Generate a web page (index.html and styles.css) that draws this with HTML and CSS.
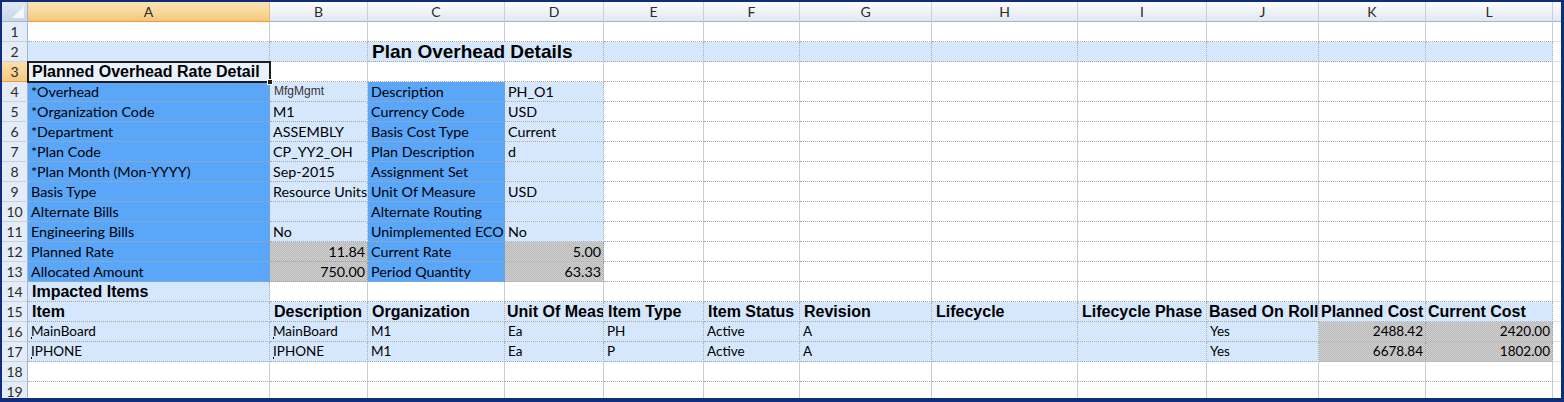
FILE: index.html
```html
<!DOCTYPE html>
<html>
<head>
<meta charset="utf-8">
<link rel="stylesheet" href="styles.css">
</head>
<body>
<div class="frame">
  <div class="sheet">
    <!-- header row -->
    <div class="corner"><span class="tri"></span></div>
    <div class="hd sel">A</div><div class="hd">B</div><div class="hd">C</div><div class="hd">D</div><div class="hd">E</div><div class="hd">F</div><div class="hd">G</div><div class="hd">H</div><div class="hd">I</div><div class="hd">J</div><div class="hd">K</div><div class="hd">L</div><div class="hd fill"></div>

    <!-- 1 -->
    <div class="rh">1</div>
    <div class="c"></div><div class="c"></div><div class="c"></div><div class="c"></div><div class="c"></div><div class="c"></div><div class="c"></div><div class="c"></div><div class="c"></div><div class="c"></div><div class="c"></div><div class="c"></div><div class="c fill"></div>

    <!-- 2 -->
    <div class="rh">2</div>
    <div class="c lb"></div><div class="c lb"></div><div class="c lb span2 title">Plan Overhead Details</div><div class="c lb"></div><div class="c lb"></div><div class="c lb"></div><div class="c lb"></div><div class="c lb"></div><div class="c lb"></div><div class="c lb"></div><div class="c lb"></div><div class="c fill"></div>

    <!-- 3 -->
    <div class="rh sel">3</div>
    <div class="c active b sub">Planned Overhead Rate Detail<span class="handle"></span></div><div class="c"></div><div class="c"></div><div class="c"></div><div class="c"></div><div class="c"></div><div class="c"></div><div class="c"></div><div class="c"></div><div class="c"></div><div class="c"></div><div class="c"></div><div class="c fill"></div>

    <!-- 4 -->
    <div class="rh">4</div>
    <div class="c db">*Overhead</div><div class="c lb sm">MfgMgmt</div><div class="c db">Description</div><div class="c lb">PH_O1</div>
    <div class="c"></div><div class="c"></div><div class="c"></div><div class="c"></div><div class="c"></div><div class="c"></div><div class="c"></div><div class="c"></div><div class="c fill"></div>

    <!-- 5 -->
    <div class="rh">5</div>
    <div class="c db">*Organization Code</div><div class="c lb">M1</div><div class="c db">Currency Code</div><div class="c lb">USD</div>
    <div class="c"></div><div class="c"></div><div class="c"></div><div class="c"></div><div class="c"></div><div class="c"></div><div class="c"></div><div class="c"></div><div class="c fill"></div>

    <!-- 6 -->
    <div class="rh">6</div>
    <div class="c db">*Department</div><div class="c lb">ASSEMBLY</div><div class="c db">Basis Cost Type</div><div class="c lb">Current</div>
    <div class="c"></div><div class="c"></div><div class="c"></div><div class="c"></div><div class="c"></div><div class="c"></div><div class="c"></div><div class="c"></div><div class="c fill"></div>

    <!-- 7 -->
    <div class="rh">7</div>
    <div class="c db">*Plan Code</div><div class="c lb">CP_YY2_OH</div><div class="c db">Plan Description</div><div class="c lb">d</div>
    <div class="c"></div><div class="c"></div><div class="c"></div><div class="c"></div><div class="c"></div><div class="c"></div><div class="c"></div><div class="c"></div><div class="c fill"></div>

    <!-- 8 -->
    <div class="rh">8</div>
    <div class="c db">*Plan Month (Mon-YYYY)</div><div class="c lb">Sep-2015</div><div class="c db">Assignment Set</div><div class="c lb"></div>
    <div class="c"></div><div class="c"></div><div class="c"></div><div class="c"></div><div class="c"></div><div class="c"></div><div class="c"></div><div class="c"></div><div class="c fill"></div>

    <!-- 9 -->
    <div class="rh">9</div>
    <div class="c db">Basis Type</div><div class="c lb">Resource Units</div><div class="c db">Unit Of Measure</div><div class="c lb">USD</div>
    <div class="c"></div><div class="c"></div><div class="c"></div><div class="c"></div><div class="c"></div><div class="c"></div><div class="c"></div><div class="c"></div><div class="c fill"></div>

    <!-- 10 -->
    <div class="rh">10</div>
    <div class="c db">Alternate Bills</div><div class="c lb"></div><div class="c db">Alternate Routing</div><div class="c lb"></div>
    <div class="c"></div><div class="c"></div><div class="c"></div><div class="c"></div><div class="c"></div><div class="c"></div><div class="c"></div><div class="c"></div><div class="c fill"></div>

    <!-- 11 -->
    <div class="rh">11</div>
    <div class="c db">Engineering Bills</div><div class="c lb">No</div><div class="c db">Unimplemented ECO</div><div class="c lb">No</div>
    <div class="c"></div><div class="c"></div><div class="c"></div><div class="c"></div><div class="c"></div><div class="c"></div><div class="c"></div><div class="c"></div><div class="c fill"></div>

    <!-- 12 -->
    <div class="rh">12</div>
    <div class="c db">Planned Rate</div><div class="c gr num">11.84</div><div class="c db">Current Rate</div><div class="c gr num">5.00</div>
    <div class="c"></div><div class="c"></div><div class="c"></div><div class="c"></div><div class="c"></div><div class="c"></div><div class="c"></div><div class="c"></div><div class="c fill"></div>

    <!-- 13 -->
    <div class="rh">13</div>
    <div class="c db">Allocated Amount</div><div class="c gr num">750.00</div><div class="c db">Period Quantity</div><div class="c gr num">63.33</div>
    <div class="c"></div><div class="c"></div><div class="c"></div><div class="c"></div><div class="c"></div><div class="c"></div><div class="c"></div><div class="c"></div><div class="c fill"></div>

    <!-- 14 -->
    <div class="rh">14</div>
    <div class="c lb b">Impacted Items</div>
    <div class="c"></div><div class="c"></div><div class="c"></div><div class="c"></div><div class="c"></div><div class="c"></div><div class="c"></div><div class="c"></div><div class="c"></div><div class="c"></div><div class="c"></div><div class="c fill"></div>

    <!-- 15 -->
    <div class="rh">15</div>
    <div class="c lb b">Item</div><div class="c lb b">Description</div><div class="c lb b">Organization</div><div class="c lb b tight">Unit Of Meas</div><div class="c lb b">Item Type</div><div class="c lb b">Item Status</div><div class="c lb b">Revision</div><div class="c lb b">Lifecycle</div><div class="c lb b">Lifecycle Phase</div><div class="c lb b tight">Based On Roll</div><div class="c lb b tight">Planned Cost</div><div class="c lb b tight">Current Cost</div><div class="c fill"></div>

    <!-- 16 -->
    <div class="rh">16</div>
    <div class="c lb it"><span class="mark"></span>MainBoard</div><div class="c lb it"><span class="mark"></span>MainBoard</div><div class="c lb it">M1</div><div class="c lb it">Ea</div><div class="c lb it">PH</div><div class="c lb it">Active</div><div class="c lb it">A</div><div class="c lb"></div><div class="c lb"></div><div class="c lb it">Yes</div><div class="c gr num it">2488.42</div><div class="c gr num it">2420.00</div><div class="c fill"></div>

    <!-- 17 -->
    <div class="rh">17</div>
    <div class="c lb it"><span class="mark"></span>IPHONE</div><div class="c lb it"><span class="mark"></span>IPHONE</div><div class="c lb it">M1</div><div class="c lb it">Ea</div><div class="c lb it">P</div><div class="c lb it">Active</div><div class="c lb it">A</div><div class="c lb"></div><div class="c lb"></div><div class="c lb it">Yes</div><div class="c gr num it">6678.84</div><div class="c gr num it">1802.00</div><div class="c fill"></div>

    <!-- 18 -->
    <div class="rh">18</div>
    <div class="c"></div><div class="c"></div><div class="c"></div><div class="c"></div><div class="c"></div><div class="c"></div><div class="c"></div><div class="c"></div><div class="c"></div><div class="c"></div><div class="c"></div><div class="c"></div><div class="c fill"></div>

    <!-- 19 -->
    <div class="rh">19</div>
    <div class="c"></div><div class="c"></div><div class="c"></div><div class="c"></div><div class="c"></div><div class="c"></div><div class="c"></div><div class="c"></div><div class="c"></div><div class="c"></div><div class="c"></div><div class="c"></div><div class="c fill"></div>
  </div>
</div>
</body>
</html>
```

FILE: styles.css
```css
* { box-sizing: border-box; }
html, body { margin: 0; padding: 0; background: #ffffff; }

.frame {
  width: 1564px;
  height: 402px;
  border-style: solid;
  border-color: #0f2d7c;
  border-width: 2px 3px 4px 2px;
  overflow: hidden;
  background: #ffffff;
}

.sheet {
  display: grid;
  grid-template-columns: 26px 242px 98px 137px 99px 100px 96px 132px 146px 129px 112px 107px 127px 1fr;
  grid-auto-rows: 20px;
  font-family: Lato, "Liberation Sans", sans-serif;
  font-size: 14.3px;
  color: #000;
}

/* header row */
.corner {
  background: linear-gradient(180deg, #dfe8f5 0%, #c7d6eb 100%);
  border-right: 1px solid #9eb6ce;
  border-bottom: 1px solid #9eb6ce;
  display: flex;
  align-items: flex-end;
  justify-content: flex-end;
  padding: 0 3px 3px 0;
}
.tri {
  width: 0;
  height: 0;
  border-style: solid;
  border-width: 0 0 12px 12px;
  border-color: transparent transparent #f4f7fb transparent;
}
.hd {
  background: linear-gradient(180deg, #fafbfd 0%, #eef2f7 55%, #e1e7ef 100%);
  border-right: 1px solid #c3d1e2;
  border-bottom: 1px solid #9eb6ce;
  display: flex;
  align-items: center;
  justify-content: center;
  color: #2b2b2b;
  font-size: 14px;
}
.hd.sel {
  background: linear-gradient(180deg, #fbe3b0 0%, #f9d898 55%, #f4c57a 100%);
  border-bottom: 1px solid #f29a3b;
  border-right: 1px solid #e0b980;
}
.hd.fill { border-right: none; }

.rh {
  background: #e4ecf7;
  border-right: 1px solid #9eb6ce;
  border-bottom: 1px solid #c5d2e3;
  display: flex;
  align-items: center;
  justify-content: center;
  color: #2b2b2b;
  font-size: 14px;
}
.rh.sel {
  background: linear-gradient(180deg, #fbe0a8 0%, #f6c880 100%);
  border-bottom: 1px solid #f29a3b;
}

/* cells */
.c {
  border-right: 1px solid #c8cdd4;
  border-bottom: 1px dotted #a9a9a9;
  white-space: nowrap;
  overflow: hidden;
  display: flex;
  align-items: center;
  padding: 0 2px 0 3px;
  line-height: 19px;
  background: #ffffff;
}
.c.fill { border-right: none; border-bottom: 1px solid #dde3ea; }

.lb {
  background-color: #d5e7fc;
  background-image: repeating-conic-gradient(#cfe3fb 0 25%, #dcebfe 0 50%);
  background-size: 2px 2px;
  border-right: 1px dotted #a9b3bf;
}
.db {
  background: #5aa6f8;
  border-right: 1px dotted #7f9fc4;
}
.gr {
  background-color: #c4c4c4;
  background-image: repeating-conic-gradient(#b9b9b9 0 25%, #d0d0d0 0 50%);
  background-size: 2px 2px;
  border-right: 1px dotted #9a9a9a;
}
.num { justify-content: flex-end; }

.span2 { grid-column: span 2; }

.title {
  font-family: "Liberation Sans", Arial, sans-serif;
  font-weight: bold;
  font-size: 19px;
  padding-left: 4px;
}
.b {
  font-family: "Liberation Sans", Arial, sans-serif;
  font-weight: bold;
  font-size: 16px;
  padding-left: 4px;
}
.b.tight { padding-left: 2px; padding-right: 0; }
.sub { font-size: 16px; }
.sm {
  font-family: "Liberation Sans", Arial, sans-serif;
  font-size: 12px;
  color: #333;
  padding-left: 4px;
}
.it { font-size: 13.5px; }

.active {
  position: relative;
  overflow: visible;
  background: #e9f1fc;
  outline: 2px solid #1e1e1e;
  outline-offset: -1px;
  z-index: 2;
}
.handle {
  position: absolute;
  right: -4px;
  bottom: -4px;
  width: 6px;
  height: 6px;
  background: #1e1e1e;
  border: 1px solid #ffffff;
}
.mark {
  display: inline-block;
  width: 1px;
  height: 2px;
  background: #000;
  align-self: flex-end;
  margin-bottom: 2px;
  margin-right: -1px;
}
```
